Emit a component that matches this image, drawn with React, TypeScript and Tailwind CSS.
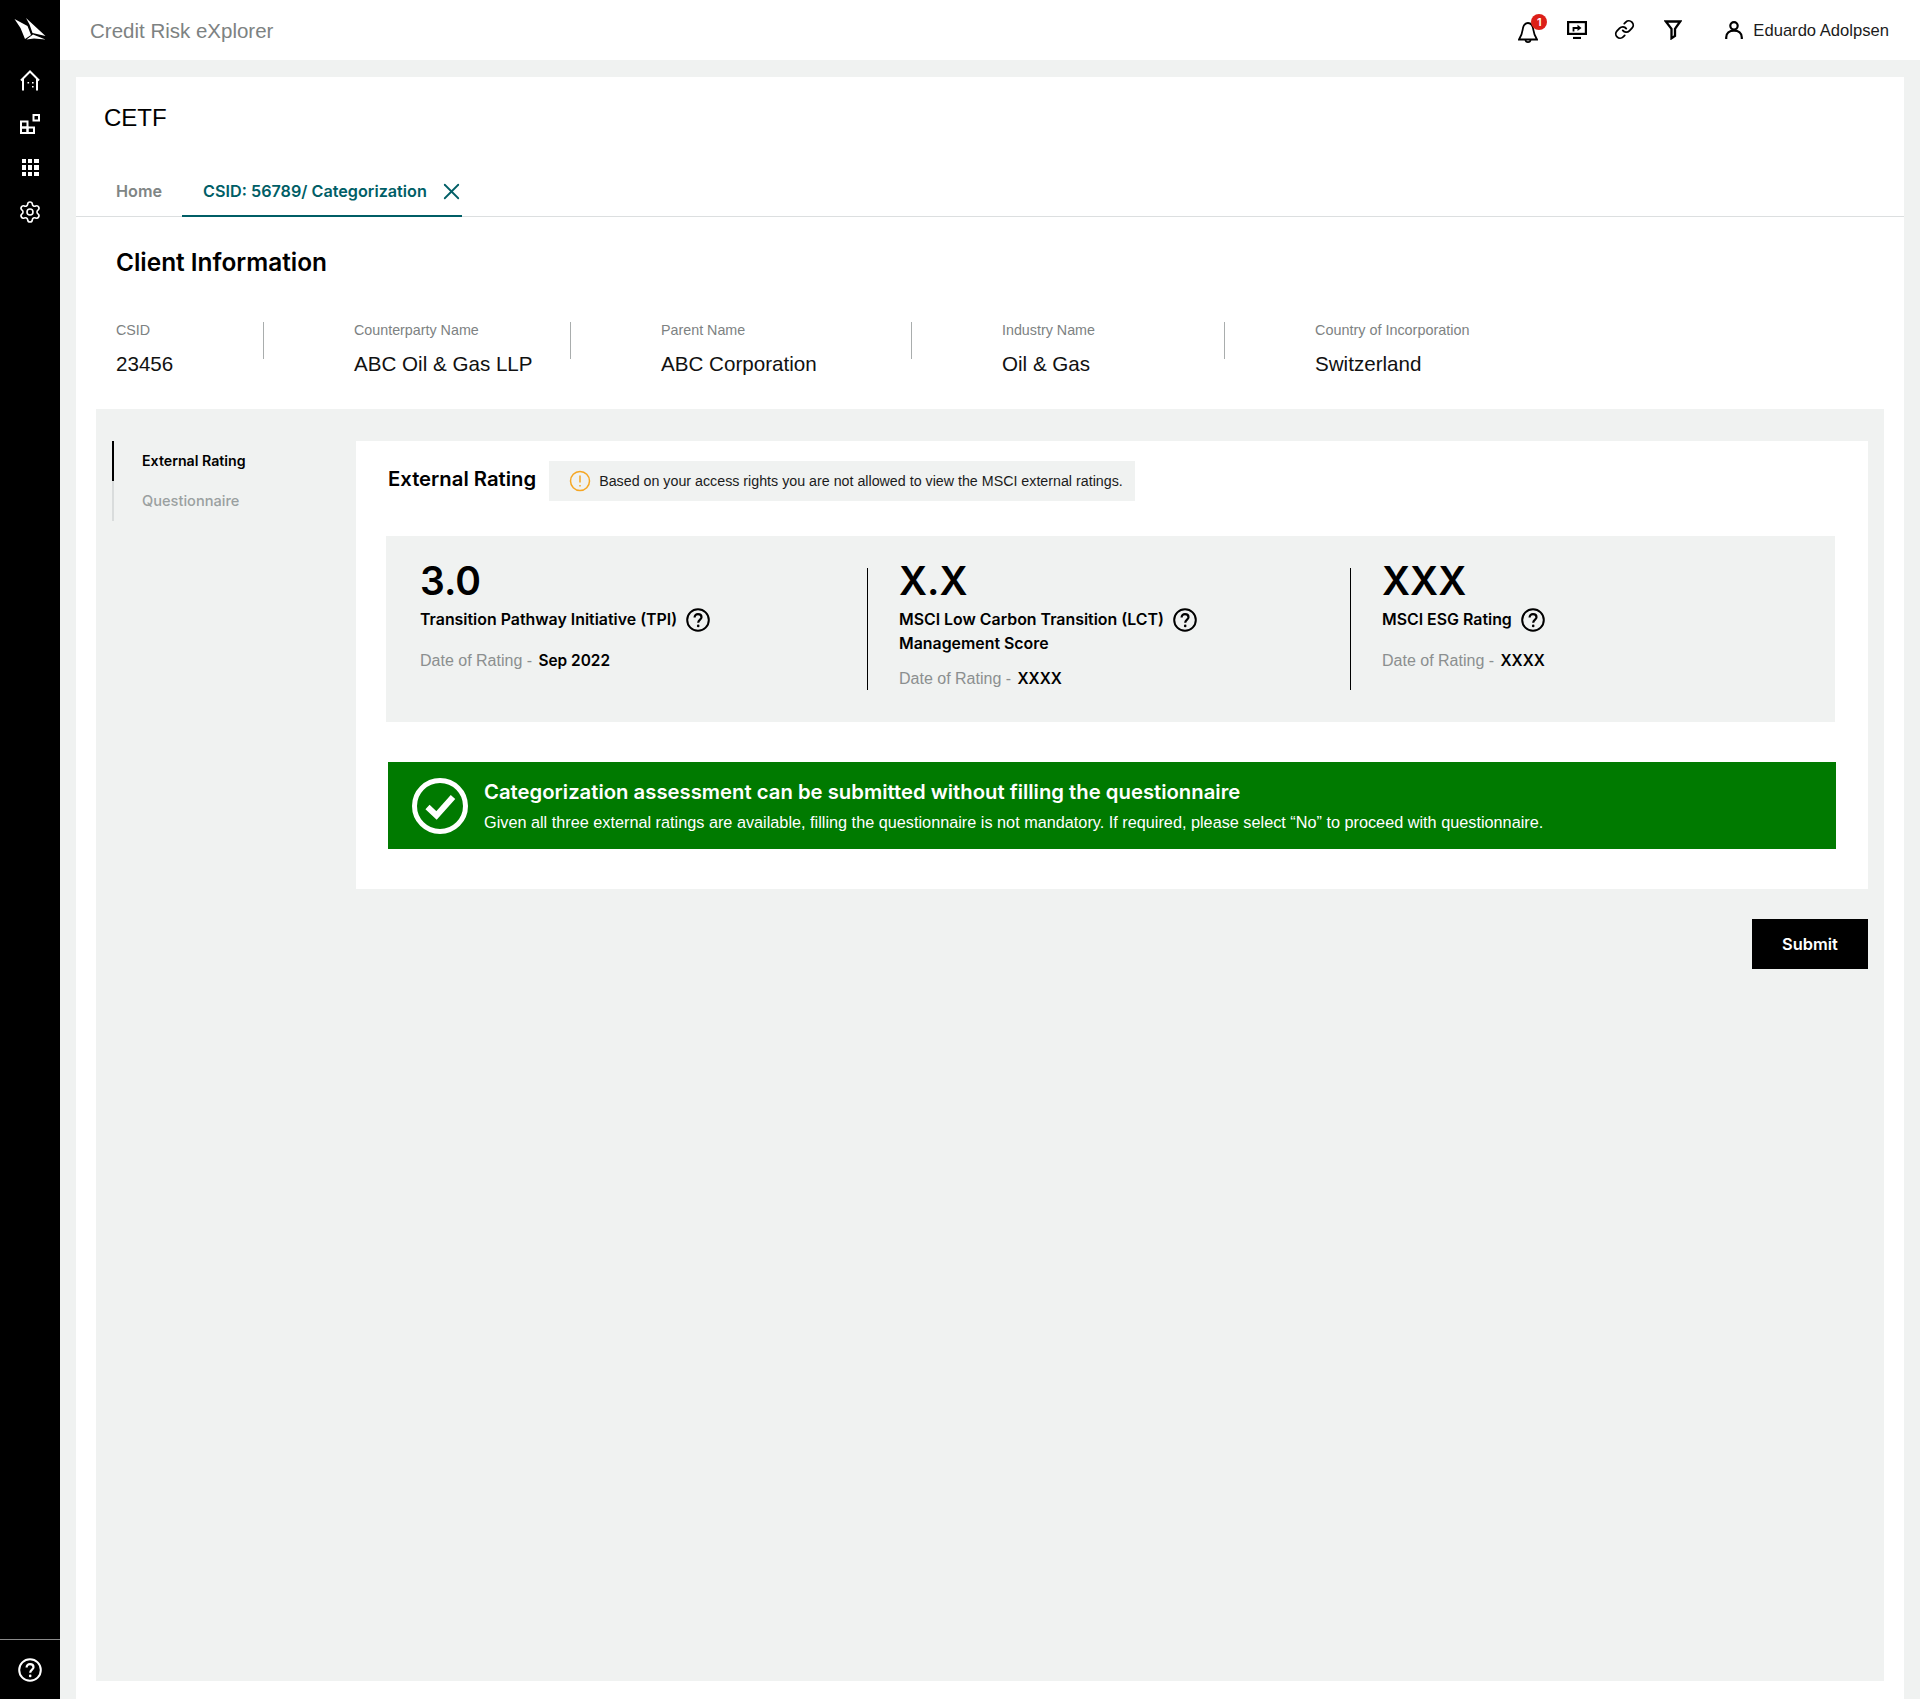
import React from 'react';
import { Link, X, Settings } from 'lucide-react';

const sans = "font-['Liberation_Sans',Arial,sans-serif]";
const bold = "font-['Inter',sans-serif] font-semibold";

const Logo = () => (
  <svg width="44" height="30" viewBox="0 0 44 30" fill="white">
    <path d="M6.5 9 L19.5 16 L23 25 L17 29 L12.5 18 Z" />
    <path d="M18 8 L37.5 26 L24.5 23 L21.5 14.5 Z" />
    <path d="M18.5 29.5 L25 24.5 L37.5 29.5 L26 28.5 Z" />
  </svg>
);

const HomeIcon = () => (
  <svg width="20" height="21" viewBox="0 0 20 21" fill="none" stroke="white" strokeWidth="2">
    <path d="M1 10.5 L10 1.5 L19 10.5" />
    <path d="M3 9 V20.5 M17 9 V20.5" />
    <path d="M7.5 12.7 h1.6 M12 12.7 h1.6 M12 16.7 h1.6" strokeWidth="1.6" />
  </svg>
);

const WidgetIcon = () => (
  <svg width="20" height="20" viewBox="0 0 20 20" fill="none" stroke="white" strokeWidth="2">
    <rect x="1" y="7.5" width="6.5" height="6" />
    <rect x="1" y="13.5" width="6.5" height="5.5" />
    <rect x="7.5" y="13.5" width="6.5" height="5.5" />
    <rect x="13.5" y="1" width="5.5" height="5.5" />
  </svg>
);

const BellIcon = () => (
  <svg width="20" height="21" viewBox="0 0 20 21" fill="none" stroke="black" strokeWidth="1.8">
    <path d="M10 1 C6 1 5 4.5 4.6 8 C4.2 12 2.8 14.5 1 17.5 H19 C17.2 14.5 15.8 12 15.4 8 C15 4.5 14 1 10 1 Z" />
    <path d="M7.5 18 C7.8 20.8 12.2 20.8 12.5 18" />
  </svg>
);

const ScreenShare = () => (
  <svg width="20" height="18" viewBox="0 0 20 18" fill="none" stroke="black" strokeWidth="2.2">
    <rect x="1.1" y="1.1" width="17.8" height="11.8" />
    <path d="M6 17 h8" />
    <path d="M6.5 10.5 V7 H11" strokeWidth="1.8" />
    <path d="M10.5 3.8 L14.5 7 L10.5 10 Z" fill="black" stroke="none" />
  </svg>
);

const FunnelIcon = () => (
  <svg width="18" height="20" viewBox="0 0 18 20" fill="none" stroke="black" strokeWidth="2.3">
    <path d="M1.8 1.5 H16.2 L11 8.8 V16 L7.5 18.3 V8.8 Z" />
  </svg>
);

const PersonIcon = () => (
  <svg width="18" height="18" viewBox="0 0 18 18" fill="none" stroke="black" strokeWidth="2.2">
    <circle cx="9" cy="4.8" r="3.7" />
    <path d="M1.2 18 V16.5 C1.2 12 4.5 9.6 9 9.6 C13.5 9.6 16.8 12 16.8 16.5 V18" />
  </svg>
);

const HelpCircle = ({ color = 'black', size = 24 }: { color?: string; size?: number }) => (
  <svg width={size} height={size} viewBox="0 0 24 24" fill="none" stroke={color} strokeWidth="2">
    <circle cx="12" cy="12" r="10.8" />
    <path d="M8.6 9.6 C8.6 7.4 10 6.2 12 6.2 C14 6.2 15.5 7.4 15.5 9.3 C15.5 11.6 12.2 11.8 12.2 14.8" strokeWidth="2.2" />
    <circle cx="12.2" cy="17.9" r="1.3" fill={color} stroke="none" />
  </svg>
);

const clientFields = [
  { label: 'CSID', value: '23456', width: 'w-[148px]', pad: 'pl-0' },
  { label: 'Counterparty Name', value: 'ABC Oil & Gas LLP', width: 'w-[307px]', pad: 'pl-[90px]' },
  { label: 'Parent Name', value: 'ABC Corporation', width: 'w-[341px]', pad: 'pl-[90px]' },
  { label: 'Industry Name', value: 'Oil & Gas', width: 'w-[313px]', pad: 'pl-[90px]' },
];

const RatingLabel = ({ children }: { children: React.ReactNode }) => (
  <span className={`text-[15.9px] leading-[24px] text-black ${bold}`}>{children}</span>
);

const DateOfRating = ({ value }: { value: string }) => (
  <p className={`text-[16px] leading-[24px] text-[#8b8f8f] ${sans}`}>
    Date of Rating - <span className={`ml-[2px] text-[15.4px] text-black ${bold}`}>{value}</span>
  </p>
);

const App: React.FC = () => {
  return (
    <div className={`flex h-[1699px] w-[1920px] overflow-hidden bg-[#f0f2f1] ${sans}`}>
      <aside className="flex w-[60px] shrink-0 flex-col items-center bg-black">
        <div className="mt-[10px]"><Logo /></div>
        <div className="mt-[30px]"><HomeIcon /></div>
        <div className="mt-[23px]"><WidgetIcon /></div>
        <div className="mt-[25px] grid h-[17px] w-[17px] grid-cols-3 gap-[2px]">
          {Array.from({ length: 9 }).map((_, i) => (
            <span key={i} className="bg-white" />
          ))}
        </div>
        <Settings size={24} color="white" strokeWidth={1.6} className="mt-[24px]" />
        <div className="mt-auto flex h-[60px] w-full items-center justify-center border-t border-[#8a8a8a]">
          <HelpCircle color="white" size={24} />
        </div>
      </aside>

      <div className="flex min-w-0 flex-1 flex-col">
        <header className="flex h-[60px] shrink-0 items-center bg-white pl-[30px] pr-[31px]">
          <span className="pt-[2px] text-[20.5px] text-[#7d8282]">Credit Risk eXplorer</span>
          <div className="ml-auto flex items-center">
            <div className="relative mr-[29px] mt-[6px]">
              <BellIcon />
              <span className={`absolute -right-[9px] -top-[8px] flex h-[16px] w-[16px] items-center justify-center rounded-full bg-[#dc1f18] text-[11px] text-white ${bold}`}>1</span>
            </div>
            <div className="mr-[27px]"><ScreenShare /></div>
            <Link size={21} strokeWidth={2.1} className="mr-[29px]" />
            <div className="mr-[43px]"><FunnelIcon /></div>
            <div className="mr-[10px] mt-[1px]"><PersonIcon /></div>
            <span className="pt-[3px] text-[16.6px] text-[#1b1b1b]">Eduardo Adolpsen</span>
          </div>
        </header>

        <main className="mx-[16px] mt-[17px] flex min-h-0 flex-1 flex-col bg-white">
          <h1 className="pl-[28px] pt-[26px] text-[24px] leading-[30px] text-black">CETF</h1>
          <nav className="mt-[34px] flex h-[50px] shrink-0 items-stretch border-b border-[#dcdfe0] pl-[20px]">
            <span className={`-mb-px flex items-center border-b-2 border-transparent px-[20px] text-[16.2px] text-[#808585] ${bold}`}>Home</span>
            <span className={`-mb-px flex items-center gap-[11px] border-b-2 border-[#005e66] pl-[21px] text-[16.2px] text-[#005e66] ${bold}`}>
              CSID: 56789/ Categorization
              <X size={27} strokeWidth={1.6} className="-mr-[3px]" />
            </span>
          </nav>

          <h2 className={`pl-[40px] pt-[29px] text-[24.4px] leading-[32px] text-black ${bold}`}>Client Information</h2>

          <div className="mt-[42px] flex pl-[40px]">
            {clientFields.map((f) => (
              <div key={f.label} className={`flex ${f.width} items-stretch justify-between`}>
                <div className={f.pad}>
                  <p className="text-[14.3px] leading-[20px] text-[#7d8282]">{f.label}</p>
                  <p className="mt-[11px] text-[20.6px] leading-[26px] text-[#111]">{f.value}</p>
                </div>
                <span className="mt-[2px] h-[37px] w-px bg-[#a9adad]" />
              </div>
            ))}
            <div className="pl-[90px]">
              <p className="text-[14.4px] leading-[20px] text-[#7d8282]">Country of Incorporation</p>
              <p className="mt-[11px] text-[20.6px] leading-[26px] text-[#111]">Switzerland</p>
            </div>
          </div>

          <section className="mx-[20px] mb-[18px] mt-[32px] flex-1 bg-[#f0f2f1] pl-[16px] pr-[16px] pt-[32px]">
            <div className="flex">
              <div className="w-[244px] shrink-0">
                <div className="border-l-2 border-[#d9dcdc]">
                  <div className={`-ml-[2px] flex h-[40px] items-center border-l-2 border-black pl-[28px] text-[14.2px] text-black ${bold}`}>External Rating</div>
                  <div className="flex h-[40px] items-center pl-[28px] pt-[2px] font-['Inter',sans-serif] text-[14.6px] font-medium text-[#9aa0a0]">Questionnaire</div>
                </div>
              </div>

              <div className="flex h-[448px] flex-1 flex-col bg-white pl-[30px] pr-[32px]">
                <div className="mt-[20px] flex items-center pl-[2px]">
                  <span className={`-mt-[4px] text-[20.3px] leading-[40px] text-black ${bold}`}>External Rating</span>
                  <div className="ml-[13px] flex h-[40px] w-[586px] items-center gap-[8px] bg-[#f0f2f1] pl-[20px] text-[14.25px] text-[#1b1b1b]">
                    <svg width="22" height="22" viewBox="0 0 22 22" fill="none" stroke="#f5a623" strokeWidth="1.5">
                      <circle cx="11" cy="11" r="9.5" />
                      <path d="M11 5.5 V12.5 M11 15 V16.5" />
                    </svg>
                    <span className="pt-[2px]">Based on your access rights you are not allowed to view the MSCI external ratings.</span>
                  </div>
                </div>

                <div className="mt-[35px] flex h-[186px] w-[1449px] bg-[#f0f2f1]">
                  <div className="w-[481px] pl-[34px] pt-[20px]">
                    <p className={`text-[39px] leading-[50px] text-black ${bold}`}>3.0</p>
                    <div className="mt-[2px] flex h-[24px] items-center gap-[9px]">
                      <RatingLabel>Transition Pathway Initiative (TPI)</RatingLabel>
                      <HelpCircle />
                    </div>
                    <div className="mt-[17px]"><DateOfRating value="Sep 2022" /></div>
                  </div>
                  <div className="my-[32px] w-px bg-black" />
                  <div className="w-[482px] pl-[31px] pt-[20px]">
                    <p className={`text-[39px] leading-[50px] text-black ${bold}`}>X.X</p>
                    <div className="mt-[2px] flex h-[24px] items-center gap-[9px]">
                      <RatingLabel>MSCI Low Carbon Transition (LCT)</RatingLabel>
                      <HelpCircle />
                    </div>
                    <div className="h-[24px]"><RatingLabel>Management Score</RatingLabel></div>
                    <div className="mt-[11px]"><DateOfRating value="XXXX" /></div>
                  </div>
                  <div className="my-[32px] w-px bg-black" />
                  <div className="pl-[31px] pt-[20px]">
                    <p className={`text-[39px] leading-[50px] text-black ${bold}`}>XXX</p>
                    <div className="mt-[2px] flex h-[24px] items-center gap-[9px]">
                      <RatingLabel>MSCI ESG Rating</RatingLabel>
                      <HelpCircle />
                    </div>
                    <div className="mt-[17px]"><DateOfRating value="XXXX" /></div>
                  </div>
                </div>

                <div className="ml-[2px] mt-[40px] flex h-[87px] w-[1448px] items-center bg-[#007a00] pl-[24px] text-white">
                  <svg width="56" height="56" viewBox="0 0 56 56" fill="none" stroke="white">
                    <circle cx="28" cy="28" r="25.5" strokeWidth="5" />
                    <path d="M15.5 29 L24.5 37.5 L41 19" strokeWidth="6" />
                  </svg>
                  <div className="ml-[16px]">
                    <p className={`text-[20.3px] leading-[28px] ${bold}`}>Categorization assessment can be submitted without filling the questionnaire</p>
                    <p className="mt-[5px] text-[16.26px] leading-[22px]">Given all three external ratings are available, filling the questionnaire is not mandatory. If required, please select “No” to proceed with questionnaire.</p>
                  </div>
                </div>
              </div>
            </div>

            <div className="mt-[30px] flex justify-end">
              <button className={`h-[50px] w-[116px] bg-black text-[16.4px] text-white ${bold}`}>Submit</button>
            </div>
          </section>
        </main>
      </div>
    </div>
  );
};

export default App;
